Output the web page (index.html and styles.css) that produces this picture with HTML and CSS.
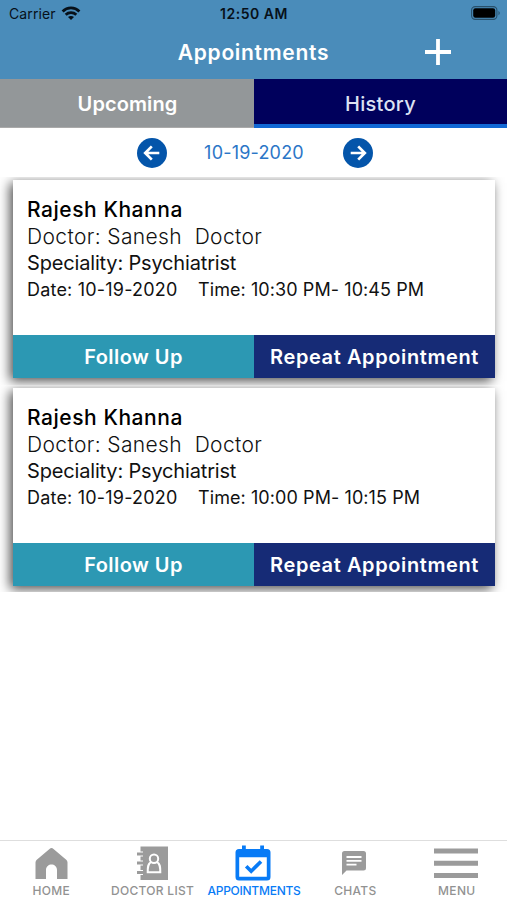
FILE: index.html
```html
<!DOCTYPE html>
<html lang="en">

    <head>
        <meta charset="utf-8">
        <title>Appointments</title>
        <link rel="stylesheet" href="styles.css">
    </head>

    <body>
        <!-- Status bar and page title -->
        <header>
            <div class="status-bar">
                <div class="carrier">
                    <span>Carrier</span>
                    <svg width="20" height="15" viewBox="0 0 20 15">
                        <g fill="none" stroke="#071019" stroke-width="2.8">
                            <path d="M1.6 5.4 C6.3 0.8 13.7 0.8 18.4 5.4"/>
                            <path d="M4.7 8.7 C7.7 5.9 12.3 5.9 15.3 8.7"/>
                        </g>
                        <path d="M10 14 L7 11 C8.6 9.5 11.4 9.5 13 11 Z" fill="#071019"/>
                    </svg>
                </div>
                <span class="clock">12:50 AM</span>
                <svg class="battery" width="30" height="14" viewBox="0 0 30 14">
                    <rect x="0.6" y="0.6" width="25.3" height="12.8" rx="3.6" fill="none" stroke="#28506b" stroke-width="1.1"/>
                    <rect x="2.2" y="2.2" width="22" height="9.6" rx="2.2" fill="#000"/>
                    <path d="M27.5 4.7 Q30 7 27.5 9.3 Z" fill="#28506b"/>
                </svg>
            </div>
            <div class="title-bar">
                <h1>Appointments</h1>
                <svg class="add" width="26" height="26" viewBox="0 0 26 26">
                    <path d="M13 0 V26 M0 13 H26" stroke="#fff" stroke-width="3.8"/>
                </svg>
            </div>
        </header>

        <!-- Tabs -->
        <nav class="tabs">
            <a class="tab"><span>Upcoming</span></a>
            <a class="tab active"><span>History</span></a>
        </nav>

        <!-- Date picker -->
        <div class="date-picker">
            <svg width="30" height="30" viewBox="0 0 30 30">
                <circle cx="15" cy="15" r="15" fill="#0455aa"/>
                <path d="M22.3 15 H8.8 M14.8 8.4 L8.2 15 L14.8 21.6" fill="none" stroke="#fff" stroke-width="2.7"/>
            </svg>
            <span class="date">10-19-2020</span>
            <svg width="30" height="30" viewBox="0 0 30 30">
                <circle cx="15" cy="15" r="15" fill="#0455aa"/>
                <path d="M7.7 15 H21.2 M15.2 8.4 L21.8 15 L15.2 21.6" fill="none" stroke="#fff" stroke-width="2.7"/>
            </svg>
        </div>

        <!-- Appointment cards -->
        <main>
            <div class="item">
                <section class="card">
                    <div class="details">
                        <h2>Rajesh Khanna</h2>
                        <p class="doctor">Doctor: Sanesh&nbsp; Doctor</p>
                        <p class="speciality">Speciality: Psychiatrist</p>
                        <p class="when"><span class="day">Date: 10-19-2020</span><span class="time">Time: 10:30 PM- 10:45 PM</span></p>
                    </div>
                    <div class="actions">
                        <a class="follow"><span>Follow Up</span></a>
                        <a class="repeat"><span>Repeat Appointment</span></a>
                    </div>
                </section>
            </div>
            <div class="item">
                <section class="card">
                    <div class="details">
                        <h2>Rajesh Khanna</h2>
                        <p class="doctor">Doctor: Sanesh&nbsp; Doctor</p>
                        <p class="speciality">Speciality: Psychiatrist</p>
                        <p class="when"><span class="day">Date: 10-19-2020</span><span class="time">Time: 10:00 PM- 10:15 PM</span></p>
                    </div>
                    <div class="actions">
                        <a class="follow"><span>Follow Up</span></a>
                        <a class="repeat"><span>Repeat Appointment</span></a>
                    </div>
                </section>
            </div>
        </main>

        <!-- Bottom navigation -->
        <nav class="bottom-nav">
            <a>
                <svg width="34" height="36" viewBox="0 0 34 36">
                    <path d="M17.5 3 Q18.5 3 19.5 4 L32.5 15 Q33.5 16 33.5 17.5 V34 H23 V25 C23 17.5 12 17.5 12 25 V34 H1.5 V17.5 Q1.5 16 2.5 15 L15.5 4 Q16.5 3 17.5 3 Z" fill="#9b9b9b"/>
                </svg>
                <span>HOME</span>
            </a>
            <a>
                <svg width="32" height="36" viewBox="0 0 32 36">
                    <rect x="4.5" y="1.5" width="27.5" height="33.5" fill="#9b9b9b"/>
                    <path d="M1 9 H7 M1 18 H7 M1 27.5 H7" stroke="#fff" stroke-width="5"/>
                    <path d="M1 9 H7 M1 18 H7 M1 27.5 H7" stroke="#9b9b9b" stroke-width="2.9"/>
                    <circle cx="18" cy="13.7" r="4.2" fill="none" stroke="#fff" stroke-width="2"/>
                    <path d="M15 17 C12 18.8 11.7 21.5 11.7 27.2 H24.3 C24.3 21.5 24 18.8 21 17" fill="none" stroke="#fff" stroke-width="2"/>
                </svg>
                <span>DOCTOR LIST</span>
            </a>
            <a class="current">
                <svg width="36" height="36" viewBox="0 0 36 36">
                    <path d="M7 0.5 H10.8 V4 H25.2 V0.5 H29 V4 H32 Q35.5 4 35.5 7.5 V32 Q35.5 35.5 32 35.5 H4 Q0.5 35.5 0.5 32 V7.5 Q0.5 4 4 4 H7 Z M4.2 12.2 V31.8 H31.8 V12.2 Z" fill="#087bf6" fill-rule="evenodd"/>
                    <path d="M11.2 21.2 L16.2 26.2 L26 16.4" fill="none" stroke="#087bf6" stroke-width="3.6"/>
                </svg>
                <span>APPOINTMENTS</span>
            </a>
            <a>
                <svg width="26" height="36" viewBox="0 0 26 36">
                    <path d="M2.5 6 H21.5 Q24 6 24 8.5 V23 Q24 25.5 21.5 25.5 H4.5 L0 30 V8.5 Q0 6 2.5 6 Z" fill="#9b9b9b"/>
                    <path d="M4.5 12 H19.5 M4.5 15.8 H19.5 M4.5 19.6 H14.5" stroke="#fff" stroke-width="1.8"/>
                </svg>
                <span>CHATS</span>
            </a>
            <a>
                <svg width="44" height="36" viewBox="0 0 44 36">
                    <path d="M0 6 H44 M0 18.2 H44 M0 30.4 H44" stroke="#9b9b9b" stroke-width="5"/>
                </svg>
                <span>MENU</span>
            </a>
        </nav>
    </body>

</html>
```
FILE: styles.css
```css
* {
    box-sizing: border-box;
}

body {
    margin: 0;
    height: 900px;
    display: flex;
    flex-direction: column;
    background-color: #fff;
    color: #111;
    font-family: Inter, "Liberation Sans", sans-serif;
    overflow: hidden;
}

h1, h2, p {
    margin: 0;
}

span, h1 {
    white-space: nowrap;
}

svg {
    display: block;
    flex: none;
}

header {
    height: 79px;
    background-color: #4a8cba;
}

.status-bar {
    height: 27px;
    padding: 0 8px 0 9px;
    display: grid;
    grid-template-columns: 1fr auto 1fr;
    align-items: center;
    color: #071019;
    font-size: 14px;
}

.carrier {
    display: flex;
    align-items: center;
    gap: 5px;
    letter-spacing: 0.1px;
}

.clock {
    font-weight: 600;
    letter-spacing: 0.5px;
}

.battery {
    justify-self: end;
    margin: -1px -2px 0 0;
}

.title-bar {
    height: 51px;
    display: grid;
    grid-template-columns: 1fr auto 1fr;
    align-items: center;
}

h1 {
    grid-column: 2;
    color: #fff;
    font-size: 21px;
    font-weight: 600;
    letter-spacing: 0.7px;
}

.add {
    margin: -1px 0 0 96px;
}

.tabs {
    height: 49px;
    display: flex;
}

.tab {
    flex: 1;
    display: flex;
    align-items: center;
    justify-content: center;
    background-color: #939799;
    border-bottom: 1px solid #aaa;
    padding: 2px 0 0 1px;
    color: #fff;
    font-size: 20px;
    font-weight: 600;
    letter-spacing: 0.1px;
}

.tab.active {
    background-color: #00005c;
    border-bottom: 4px solid #1168d4;
    padding-top: 5px;
    padding-left: 0;
    color: #dce2f3;
    font-weight: 500;
    letter-spacing: 0.3px;
}

.date-picker {
    height: 49px;
    display: flex;
    align-items: center;
    justify-content: center;
    gap: 37px;
    padding-left: 2px;
}

.date {
    width: 102px;
    padding-right: 1px;
    text-align: center;
    color: #2b76c7;
    font-size: 18px;
    letter-spacing: 0.2px;
}

/* each item clips the shadow of its card */
.item {
    height: 208px;
    padding: 3px 12px 0 13px;
    overflow: hidden;
}

.item:last-child {
    height: 207px;
}

.card {
    height: 198px;
    display: flex;
    flex-direction: column;
    background-color: #fff;
    box-shadow: -3px 3px 11px rgba(0, 0, 0, 0.7);
}

.details {
    flex: 1;
    padding: 16px 14px 0;
}

.details h2, .details p {
    height: 27px;
    line-height: 27px;
}

h2 {
    font-size: 21px;
    font-weight: 500;
    letter-spacing: 0.55px;
    color: #000;
}

.doctor {
    font-size: 21px;
    font-weight: 300;
    letter-spacing: 0.38px;
}

.speciality {
    font-size: 20px;
    letter-spacing: -0.17px;
}

.details .when {
    display: flex;
    line-height: 25px;
    font-size: 18px;
}

.day {
    width: 171px;
    letter-spacing: 0.2px;
}

.time {
    letter-spacing: 0.08px;
}

.actions {
    height: 43px;
    display: flex;
    color: #fff;
    font-size: 20px;
    font-weight: 600;
}

.actions a {
    flex: 1;
    display: flex;
    align-items: center;
    justify-content: center;
    padding-top: 1px;
}

.follow {
    background-color: #2c98b3;
    letter-spacing: 0.45px;
}

.repeat {
    background-color: #162b76;
    letter-spacing: 0.6px;
}

.bottom-nav {
    height: 60px;
    margin-top: auto;
    padding-top: 4px;
    border-top: 1px solid #dedede;
    display: grid;
    grid-template-columns: repeat(5, 1fr);
    color: #929292;
    font-size: 12px;
    font-weight: 500;
    letter-spacing: 0.3px;
}

.bottom-nav a {
    min-width: 0;
    display: flex;
    flex-direction: column;
    align-items: center;
    gap: 2px;
}

.bottom-nav span {
    padding-left: 1px;
}

.bottom-nav .current {
    color: #087bf6;
    letter-spacing: -0.25px;
}
```
